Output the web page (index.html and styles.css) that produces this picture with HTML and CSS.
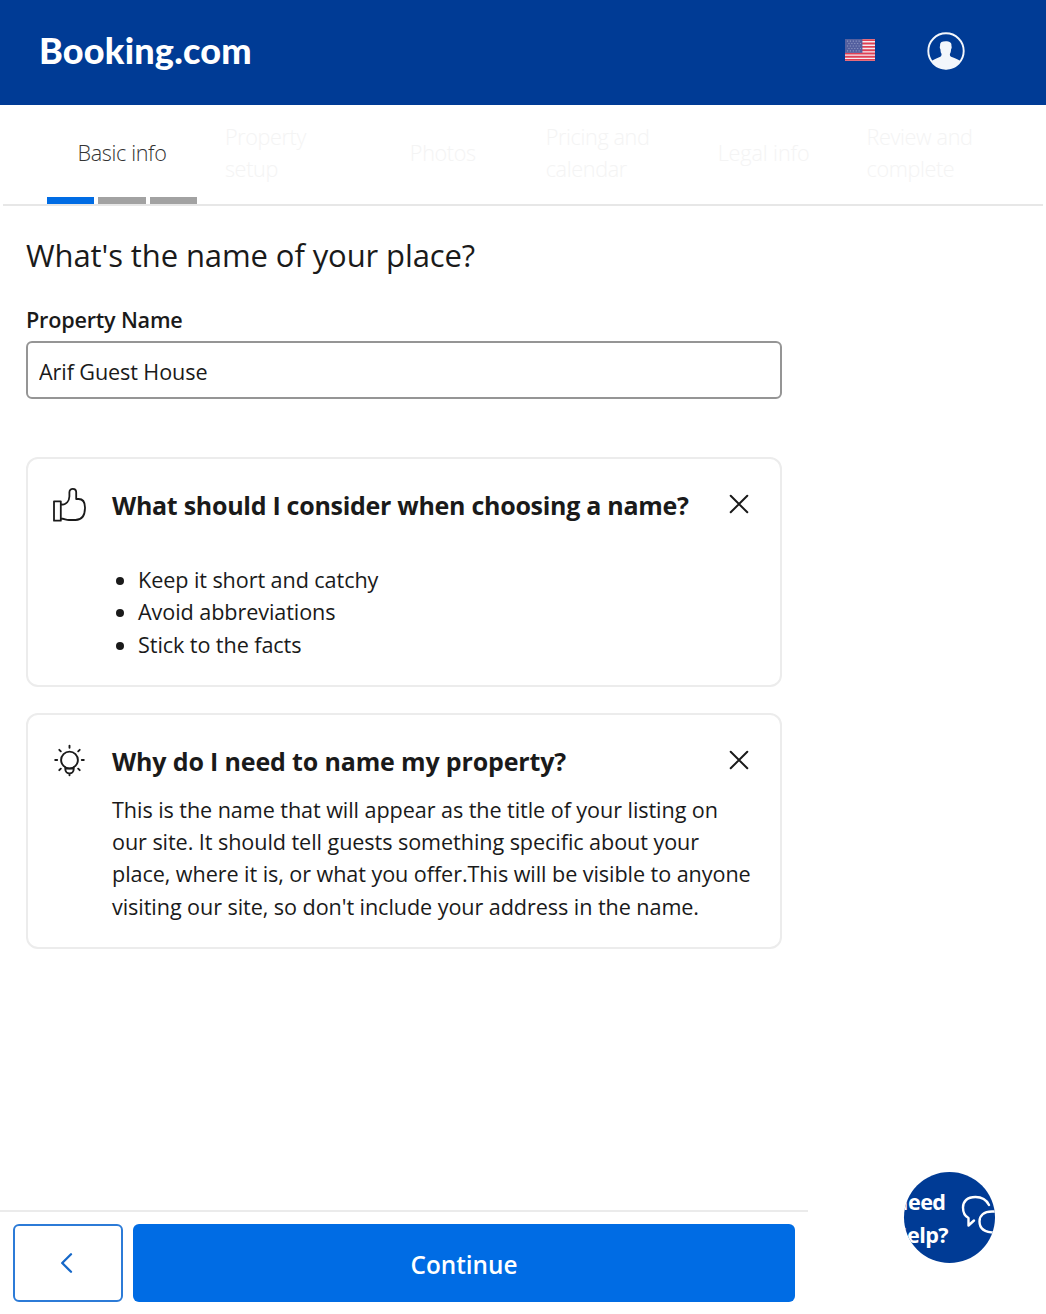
FILE: index.html
```html
<!DOCTYPE html>
<html lang="en">
<head>
<meta charset="utf-8">
<title>Booking.com</title>
<link rel="stylesheet" href="styles.css">
</head>
<body>
<header class="topbar">
  <span class="logo">Booking.com</span>
  <div class="topbar-actions">
    <svg class="flag" width="30" height="22" viewBox="0 0 31 23" preserveAspectRatio="none">
      <rect width="31" height="23" fill="#f3edf3"/>
      <path d="M0 1.2h31M0 4.7h31M0 8.2h31M0 11.7h31M0 15.1h31M0 18.5h31M0 21.8h31" stroke="#df4055" stroke-width="2"/>
      <rect width="18" height="14.5" fill="#54609f"/>
      <path d="M2 2.2h15M3.5 4.8h13M2 7.4h15M3.5 10h13M2 12.4h15" stroke="#8c95c2" stroke-width="1.1" stroke-dasharray="1.2 1.8"/>
    </svg>
    <svg class="avatar" width="38" height="38" viewBox="0 0 38 38">
      <circle cx="19" cy="19" r="17.7" fill="none" stroke="#f3f6fb" stroke-width="1.9"/>
      <path d="M4.2 29.3C7.5 26.7 11.5 25.8 13.4 24.7Q14.8 24 14.5 21.8C13.5 20.3 13.6 18.6 13.4 17.2C12.6 16.3 12.6 14.8 13.1 14C12.6 10.5 14.6 9.2 18.7 9.2C22.8 9.2 24.9 10.5 24.4 14C24.9 14.8 24.8 16.4 24.1 17.2C23.9 19 23.9 20.5 23 21.8Q22.5 24 24.1 24.7C26.3 25.9 30.6 26.8 33.8 29.3C27 40 10.8 39.5 4.2 29.3Z" fill="#f3f6fb"/>
    </svg>
  </div>
</header>
<nav class="steps">
  <div class="step step-current"><span class="step-label">Basic info</span>
    <div class="progress"><i class="done"></i><i></i><i></i></div>
  </div>
  <div class="step"><span class="step-label step-label-wide">Property<br>setup</span></div>
  <div class="step"><span class="step-label">Photos</span></div>
  <div class="step"><span class="step-label step-label-wide">Pricing and<br>calendar</span></div>
  <div class="step"><span class="step-label step-legal">Legal info</span></div>
  <div class="step"><span class="step-label step-label-wide">Review and<br>complete</span></div>
</nav>
<main class="content">
  <h1 class="heading">What's the name of your place?</h1>
  <label class="label" for="name">Property Name</label>
  <input class="field" id="name" type="text" value="Arif Guest House">
  <section class="card card-tips">
    <svg class="card-icon" width="36" height="36" viewBox="0 0 36 36" fill="none" stroke="#1a1a1a" stroke-width="1.8" stroke-linejoin="round">
      <path d="M2 14.3H8.8V33.7H2ZM8.8 17.7C14.8 17.7 17.2 13.5 17.4 9.5V5.3C17.4 .7 24.2 .7 24.2 5.3V12H26.5C31.3 12 33 15 33 20.5C33 28 31 33 23.5 33H17C13.8 33 12.5 31.6 8.8 31.5"/>
    </svg>
    <div class="card-body">
      <h2 class="card-title">What should I consider when choosing a name?</h2>
      <ul class="tips"><li>Keep it short and catchy</li><li>Avoid abbreviations</li><li>Stick to the facts</li></ul>
    </div>
    <svg class="close" width="20" height="20" viewBox="0 0 20 20"><path d="M1.7 1.7l16.6 16.6M18.3 1.7l-16.6 16.6" stroke="#1a1a1a" stroke-width="2" stroke-linecap="round"/></svg>
  </section>
  <section class="card card-why">
    <svg class="card-icon" width="36" height="36" viewBox="0 0 36 36" fill="none" stroke="#1a1a1a" stroke-width="1.9" stroke-linecap="round">
      <circle cx="17.5" cy="17" r="8.4"/>
      <path d="M13.3 24.5V26C13.3 32 21.7 32 21.7 26V24.5M13.5 25.6H21.5M17.5 30.8V32.2M17.5 2.6V4.8M3.2 17H5.2M29.8 17H31.8M7.3 6.8L8.8 8.3M27.7 6.8L26.2 8.3M7.3 27.2L8.8 25.7M27.7 27.2L26.2 25.7"/>
    </svg>
    <div class="card-body">
      <h2 class="card-title title-why">Why do I need to name my property?</h2>
      <p class="copy">This is the name that will appear as the title of your listing on<br>our site. It should tell guests something specific about your<br>place, where it is, or what you offer.This will be visible to anyone<br>visiting our site, so don't include your address in the name.</p>
    </div>
    <svg class="close" width="20" height="20" viewBox="0 0 20 20"><path d="M1.7 1.7l16.6 16.6M18.3 1.7l-16.6 16.6" stroke="#1a1a1a" stroke-width="2" stroke-linecap="round"/></svg>
  </section>
</main>
<footer class="actions">
  <button class="back" type="button" aria-label="Back"><svg width="14" height="22" viewBox="0 0 14 22"><path d="M11 2.2L2.2 11L11 19.8" fill="none" stroke="#1668c8" stroke-width="2.3" stroke-linecap="round" stroke-linejoin="round"/></svg></button>
  <button class="continue" type="button">Continue</button>
</footer>
<button class="help" type="button">
  <span class="help-text">Need<br>Help?</span>
  <svg class="help-icon" width="42" height="42" viewBox="0 0 42 42" fill="none" stroke="#fff" stroke-width="2.4" stroke-linecap="round" stroke-linejoin="round">
    <path d="M28 10C25 4 20 2 14.5 2C6 2 2 6.500 2 12.500C2 18 3.500 21 7.500 23V30.500L13 25.500"/>
    <path d="M35 16.500H31C22.500 16.500 18.500 21 18.500 26.500C18.500 33 23 37.500 34 37.500"/>
  </svg>
</button>
</body>
</html>
```
FILE: styles.css
```css
* { box-sizing: border-box; }
body { margin: 0; width: 1046px; height: 1314px; overflow: hidden; position: relative; display: flex; flex-direction: column; background: #fff; color: #1a1a1a; font: 21.6px/32.4px "Open Sans", "Noto Sans", sans-serif; letter-spacing: -0.07px; }
.topbar { height: 105px; flex: none; background: #003b95; display: flex; justify-content: space-between; padding: 0 81px 0 38px; }
.logo { color: #fff; font: 900 36px/42px Lato, sans-serif; margin: 29px 0 0 1px; letter-spacing: 0.2px; }
.topbar-actions { display: flex; align-items: center; gap: 52px; padding-bottom: 3px; }
.flag { margin-bottom: 2px; }
.steps { height: 101px; flex: none; margin: 0 3px; border-bottom: 2px solid #e7e7e7; display: grid; grid-template-columns: repeat(6, 160.4px); justify-content: center; }
.step { display: flex; align-items: center; justify-content: center; color: #f4f4f4; font-weight: 300; letter-spacing: -0.35px; position: relative; padding-bottom: 3px; }
.step-current { color: #333; }
.step-label-wide { width: 115px; }
.step-legal { letter-spacing: -0.1px; }
.progress { position: absolute; left: 5px; bottom: 0; display: flex; gap: 4px; }
.progress i { width: 47.5px; height: 7px; background: #a2a2a2; }
.progress .done { background: #006ce4; }
.content { width: 756px; margin-left: 26px; display: flex; flex-direction: column; }
.heading { margin: 28px 0 0; font-size: 31px; line-height: 42px; font-weight: 400; letter-spacing: -0.1px; }
.label { margin-top: 28px; font-weight: 600; line-height: 32px; letter-spacing: -0.2px; }
.field { margin-top: 5px; height: 58px; border: 2px solid #959595; border-radius: 6px; padding: 3px 11px 0; font: inherit; letter-spacing: -0.1px; color: inherit; width: 100%; }
.card { border: 2px solid #ececec; border-radius: 12px; display: grid; grid-template-columns: 36px minmax(0, 1fr) 20px; padding: 28px 31px 0 24px; }
.card-tips { margin-top: 58px; height: 230px; }
.card-why { margin-top: 26px; height: 236px; }
.card-body { padding-left: 24px; white-space: nowrap; }
.card-title { margin: 0; font-size: 25px; line-height: 36px; font-weight: 700; letter-spacing: -0.28px; }
.title-why { letter-spacing: -0.15px; }
.close { margin-top: 7px; }
.tips { margin: 41px 0 0; padding-left: 26px; letter-spacing: -0.08px; }
.copy { margin: 14.5px 0 0; }
.actions { width: 808px; height: 104px; margin-top: auto; border-top: 2px solid #ebebeb; padding: 12px 13px; display: flex; gap: 10px; }
.back { width: 110px; height: 78px; border: 2px solid #2c7bd7; border-radius: 6px; background: #fff; padding: 0 2px 0 0; display: flex; align-items: center; justify-content: center; }
.continue { width: 662px; height: 78px; border: 0; border-radius: 6px; background: #006ce4; color: #fff; font: 600 24.3px/32px "Open Sans", sans-serif; padding: 4px 0 0; }
.help { position: absolute; left: 904px; top: 1172px; width: 91px; height: 91px; border: 0; border-radius: 50%; overflow: hidden; background: #003b95; color: #fff; padding: 0; display: flex; justify-content: center; align-items: center; }
.help-text { font: 700 21.6px/32.4px "Open Sans", sans-serif; text-align: left; flex: none; letter-spacing: -0.6px; padding-top: 2px; }
.help-icon { flex: none; margin: 0 5px 4px 13px; }
```
